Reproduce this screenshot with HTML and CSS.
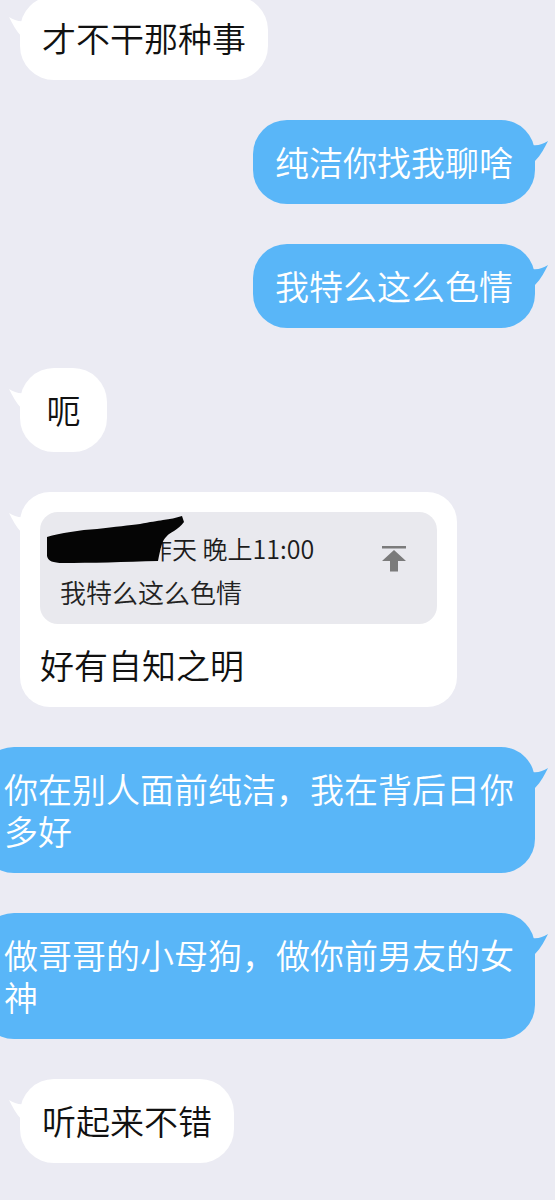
FILE: index.html
```html
<!DOCTYPE html>
<html lang="zh-CN">
<head>
  <meta charset="UTF-8">
  <title>聊天</title>
  <link rel="stylesheet" href="styles.css">
</head>
<body>
  <div class="chat">

    <div class="row in">
      <div class="bubble">才不干那种事<svg class="tail" viewBox="0 0 16 20"><path d="M16 4 C10 5 5 3 0 0 C3 6 7 14 13 20 L16 20 Z"/></svg></div>
    </div>

    <div class="row out">
      <div class="bubble">纯洁你找我聊啥<svg class="tail" viewBox="0 0 16 20"><path d="M0 4 C6 5 11 3 16 0 C13 6 9 14 3 20 L0 20 Z"/></svg></div>
    </div>

    <div class="row out">
      <div class="bubble">我特么这么色情<svg class="tail" viewBox="0 0 16 20"><path d="M0 4 C6 5 11 3 16 0 C13 6 9 14 3 20 L0 20 Z"/></svg></div>
    </div>

    <div class="row in">
      <div class="bubble short">呃<svg class="tail" viewBox="0 0 16 20"><path d="M16 4 C10 5 5 3 0 0 C3 6 7 14 13 20 L16 20 Z"/></svg></div>
    </div>

    <div class="row in">
      <div class="bubble quote">
        <div class="quote-box">
          <div class="quote-text">
            <div class="quote-meta">
              <svg class="redact" viewBox="0 0 150 52"><path d="M2 21 C15 17 35 14 52 13 C70 11 85 9 95 8 C105 6 112 5 118 4 C125 3 131 2 137 0 L139 6 C136 10 133 12 129 15 C123 18 119 22 117 28 C115 34 114 40 113 45 C80 46 45 47 18 47 C8 47 3 45 2 40 Z"/></svg>
              昨天 晚上11:00
            </div>
            <div class="quote-msg">我特么这么色情</div>
          </div>
          <svg class="pin-icon" viewBox="0 0 24 26"><rect x="0" y="0" width="24" height="2.5"/><path d="M12 4 L24 15 L16 15 L16 25.5 L8 25.5 L8 15 L0 15 Z"/></svg>
        </div>
        <div class="quote-reply">好有自知之明</div>
        <svg class="tail" viewBox="0 0 16 20"><path d="M16 4 C10 5 5 3 0 0 C3 6 7 14 13 20 L16 20 Z"/></svg>
      </div>
    </div>

    <div class="row out">
      <div class="bubble wide">你在别人面前纯洁，我在背后日你多好<svg class="tail" viewBox="0 0 16 20"><path d="M0 4 C6 5 11 3 16 0 C13 6 9 14 3 20 L0 20 Z"/></svg></div>
    </div>

    <div class="row out">
      <div class="bubble wide">做哥哥的小母狗，做你前男友的女神<svg class="tail" viewBox="0 0 16 20"><path d="M0 4 C6 5 11 3 16 0 C13 6 9 14 3 20 L0 20 Z"/></svg></div>
    </div>

    <div class="row in">
      <div class="bubble">听起来不错<svg class="tail" viewBox="0 0 16 20"><path d="M16 4 C10 5 5 3 0 0 C3 6 7 14 13 20 L16 20 Z"/></svg></div>
    </div>

  </div>
</body>
</html>
```

FILE: styles.css
```css
body {
  margin: 0;
  background-color: #ebebf3;
  font-family: "Noto Sans CJK SC", "Noto Sans", sans-serif;
  font-weight: 350;
  overflow-x: hidden;
}

.chat {
  display: flex;
  flex-direction: column;
  gap: 40px;
  padding: 0 20px 40px;
  margin-top: -4px;
}

.row {
  display: flex;
}

.row.out {
  justify-content: flex-end;
}

.bubble {
  position: relative;
  box-sizing: border-box;
  padding: 21px 22px;
  font-size: 34px;
  line-height: 42px;
  border-radius: 34px;
}

.row.in .bubble {
  background: #ffffff;
  color: #111111;
}

.row.out .bubble {
  background: #59b6f8;
  color: #ffffff;
}

.bubble.short {
  min-width: 87px;
  text-align: center;
}

.bubble.wide {
  width: 555px;
  flex-shrink: 0;
  padding: 21px 20px 21px 24px;
}

.tail {
  position: absolute;
  top: 21px;
  width: 16px;
  height: 20px;
}

.row.in .tail {
  left: -11px;
  fill: #ffffff;
}

.row.out .tail {
  right: -13px;
  fill: #59b6f8;
}

/* quoted reply */
.bubble.quote {
  width: 437px;
  padding: 20px 20px 21px;
  border-radius: 30px;
}

.quote-box {
  display: flex;
  align-items: flex-start;
  background: #e9e9ee;
  border-radius: 18px;
  padding: 15px 31px 11px 20px;
}

.quote-text {
  flex: 1;
  font-size: 25px;
  line-height: 43px;
  color: #1c1c1c;
}

.quote-meta {
  position: relative;
  padding-left: 87px;
}

.redact {
  position: absolute;
  left: -15px;
  top: -11px;
  width: 150px;
  height: 52px;
  fill: #050505;
}

.quote-msg {
  font-size: 26px;
  color: #222;
}

.pin-icon {
  width: 24px;
  height: 26px;
  margin-top: 19px;
  fill: #7b7b7b;
}

.quote-reply {
  margin-top: 20px;
}
```
